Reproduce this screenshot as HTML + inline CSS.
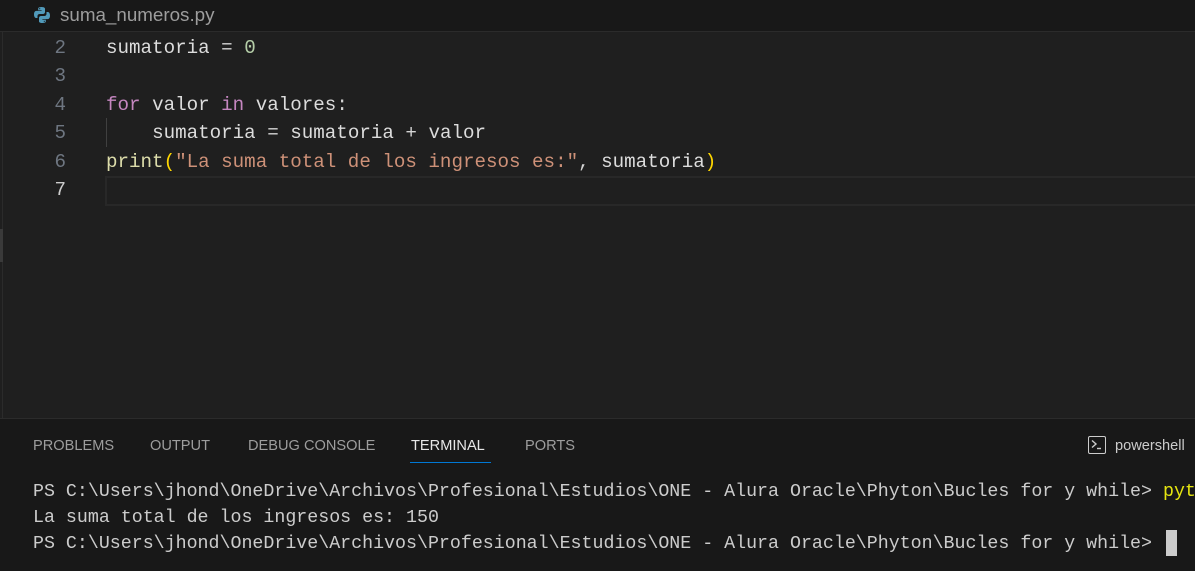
<!DOCTYPE html>
<html><head><meta charset="utf-8"><style>
body{margin:0;width:1195px;height:570px;background:#1f1f1f;overflow:hidden;position:relative;font-family:"Liberation Sans",sans-serif}
.tabbar{position:absolute;left:0;top:0;width:1195px;height:31px;background:#181818;border-bottom:1px solid #2b2b2b}
.tab{position:absolute;left:33px;top:4px;color:#9d9d9d;font-size:18.8px;display:flex;align-items:center}
.tab svg{margin-right:9px}
.leftline{position:absolute;left:2px;top:32px;width:1px;height:386px;background:#2b2b2b}
.code{position:absolute;left:0;top:35px;font-family:"Liberation Mono",monospace;font-size:19.2px}
.ln{position:absolute;left:0;width:66px;text-align:right;color:#6e7681}
.l{position:absolute;left:106px;white-space:pre;color:#d4d4d4}
.v{color:#dcdcdc}.k{color:#c586c0}.n{color:#b5cea8}.f{color:#dcdcaa}.s{color:#ce9178}.p{color:#ffd700}
.cur{position:absolute;left:105px;top:176px;width:1090px;height:26px;border:2px solid #282828;border-right:none}
.guide{position:absolute;left:106px;top:118px;width:1px;height:29px;background:#404040}
.panel{position:absolute;left:0;top:418px;width:1195px;height:152px;background:#181818;border-top:1px solid #2b2b2b}
.ptab{position:absolute;top:19px;font-size:14.6px;color:#9d9d9d}
.term{position:absolute;left:33px;font-family:"Liberation Mono",monospace;font-size:18.3px;color:#cccccc;white-space:pre}
</style></head><body>
<div class="tabbar"><div class="tab">
<svg width="18" height="18" viewBox="0 0 18 18"><path d="M8.5 1C5 1 5.2 2.5 5.2 2.5V4.3h3.4v.6H3.5S1 4.6 1 8.4s2.2 3.6 2.2 3.6h1.3v-1.8S4.4 8 6.6 8h3.3s2.1 0 2.1-2V2.8S12.3 1 8.5 1zM6.7 2.1a.6.6 0 110 1.2.6.6 0 010-1.2z" fill="#519aba"/><path d="M9.5 17c3.5 0 3.3-1.5 3.300-1.5v-1.8H9.4v-.6h5.1S17 13.4 17 9.6 14.8 6 14.8 6h-1.3v1.8s.1 2.2-2.1 2.2H8.1S6 10 6 12v3.2S5.700 17 9.5 17zm1.8-1.1a.6.6 0 110-1.2.6.6 0 010 1.2z" fill="#519aba"/></svg>suma_numeros.py</div></div>
<div class="leftline"></div>
<div style="position:absolute;left:0;top:229px;width:3px;height:33px;background:#3a3a3a"></div>
<div class="cur"></div>
<div class="guide"></div>
<div class="code">
<div class="ln" style="top:2px">2</div><div class="l" style="top:2px"><span class="v">sumatoria</span> = <span class="n">0</span></div>
<div class="ln" style="top:30px">3</div>
<div class="ln" style="top:59px">4</div><div class="l" style="top:59px"><span class="k">for</span> <span class="v">valor</span> <span class="k">in</span> <span class="v">valores</span>:</div>
<div class="ln" style="top:87px">5</div><div class="l" style="top:87px">    <span class="v">sumatoria</span> = <span class="v">sumatoria</span> + <span class="v">valor</span></div>
<div class="ln" style="top:116px">6</div><div class="l" style="top:116px"><span class="f">print</span><span class="p">(</span><span class="s">"La suma total de los ingresos es:"</span>, <span class="v">sumatoria</span><span class="p">)</span></div>
<div class="ln" style="top:144px;color:#cccccc">7</div>
</div>
<div class="panel">
<div class="ptab" style="left:33px">PROBLEMS</div>
<div class="ptab" style="left:150px">OUTPUT</div>
<div class="ptab" style="left:248px">DEBUG CONSOLE</div>
<div class="ptab" style="left:411px;color:#e7e7e7">TERMINAL</div>
<div style="position:absolute;left:410px;top:43px;width:81px;height:1px;background:#0078d4"></div>
<div class="ptab" style="left:525px">PORTS</div>
<div style="position:absolute;left:1088px;top:17px;width:18px;height:18px;border:1.5px solid #ccc;border-radius:2px;box-sizing:border-box"><svg width="15" height="15" viewBox="0 0 15 15" style="position:absolute;left:0;top:0"><path d="M3 3.5l4 3.5-4 3.5" stroke="#ccc" stroke-width="1.4" fill="none"/><path d="M8 11.5h4" stroke="#ccc" stroke-width="1.4"/></svg></div>
<div class="ptab" style="left:1115px;color:#cccccc">powershell</div>
<div class="term" style="top:63px">PS C:\Users\jhond\OneDrive\Archivos\Profesional\Estudios\ONE - Alura Oracle\Phyton\Bucles for y while> <span style="color:#e5e510">python</span></div>
<div class="term" style="top:89px">La suma total de los ingresos es: 150</div>
<div class="term" style="top:115px">PS C:\Users\jhond\OneDrive\Archivos\Profesional\Estudios\ONE - Alura Oracle\Phyton\Bucles for y while> </div>
<div style="position:absolute;left:1166px;top:111px;width:11px;height:26px;background:#cccccc"></div>
</div>
</body></html>
